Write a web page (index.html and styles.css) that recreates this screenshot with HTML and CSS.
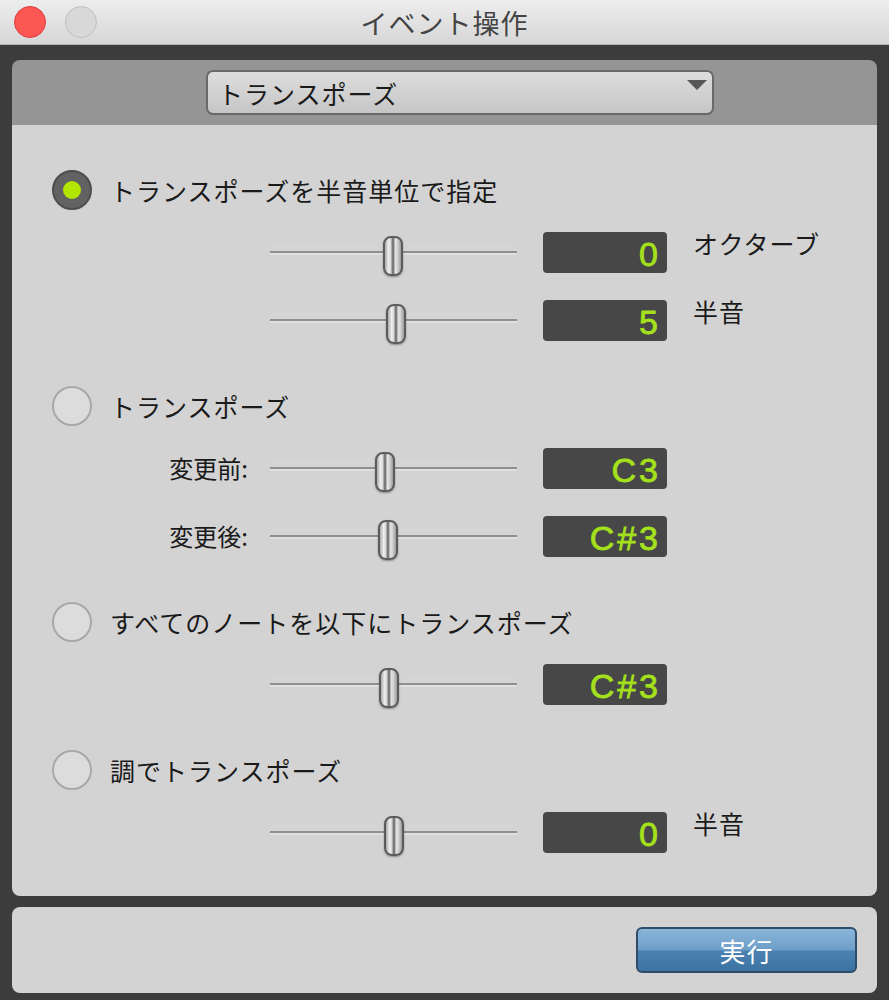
FILE: index.html
```html
<!DOCTYPE html>
<html>
  <head>
    <title>イベント操作</title>
    <link rel="stylesheet" href="styles.css">
  </head>
  <body>

    <header class="titlebar">
      <div class="lights">
        <span class="light close"></span>
        <span class="light idle"></span>
      </div>
      <h1>イベント操作</h1>
    </header>

    <main class="frame">
      <section class="panel">
        <div class="panel-head">
          <div class="select">
            <span>トランスポーズ</span>
            <span class="arrow"></span>
          </div>
        </div>

        <div class="panel-body">

          <div class="group">
            <label class="radio-row">
              <span class="radio on"></span>
              トランスポーズを半音単位で指定
            </label>
            <div class="slider-row">
              <span class="row-label"></span>
              <div class="track"><span class="thumb" style="left: 113px"></span></div>
              <output class="value">0</output>
              <span class="unit">オクターブ</span>
            </div>
            <div class="slider-row">
              <span class="row-label"></span>
              <div class="track"><span class="thumb" style="left: 116px"></span></div>
              <output class="value">5</output>
              <span class="unit">半音</span>
            </div>
          </div>

          <div class="group">
            <label class="radio-row">
              <span class="radio"></span>
              トランスポーズ
            </label>
            <div class="slider-row">
              <span class="row-label">変更前:</span>
              <div class="track"><span class="thumb" style="left: 105px"></span></div>
              <output class="value">C3</output>
              <span class="unit"></span>
            </div>
            <div class="slider-row">
              <span class="row-label">変更後:</span>
              <div class="track"><span class="thumb" style="left: 108px"></span></div>
              <output class="value">C#3</output>
              <span class="unit"></span>
            </div>
          </div>

          <div class="group">
            <label class="radio-row">
              <span class="radio"></span>
              すべてのノートを以下にトランスポーズ
            </label>
            <div class="slider-row">
              <span class="row-label"></span>
              <div class="track"><span class="thumb" style="left: 109px"></span></div>
              <output class="value">C#3</output>
              <span class="unit"></span>
            </div>
          </div>

          <div class="group">
            <label class="radio-row">
              <span class="radio"></span>
              調でトランスポーズ
            </label>
            <div class="slider-row">
              <span class="row-label"></span>
              <div class="track"><span class="thumb" style="left: 114px"></span></div>
              <output class="value">0</output>
              <span class="unit">半音</span>
            </div>
          </div>

        </div>
      </section>

      <section class="footer">
        <button class="run">実行</button>
      </section>
    </main>

  </body>
</html>
```

FILE: styles.css
```css
*,
*:before,
*:after {
  box-sizing: border-box;
}

html,
body {
  margin: 0;
  padding: 0;
  background: #3c3c3c;
  font-family: "Noto Sans CJK JP", "Noto Sans", sans-serif;
  color: #1a1a1a;
}

/* window title */
.titlebar {
  display: grid;
  grid-template-columns: 1fr auto 1fr;
  align-items: center;
  height: 45px;
  background: linear-gradient(#ededed, #d7d7d7);
  border-bottom: 1px solid #b3b3b3;
}

.lights {
  display: flex;
  gap: 19px;
  padding-left: 14px;
}

.light {
  width: 32px;
  height: 32px;
  border-radius: 50%;
}

.light.close {
  background: #fc5753;
  border: 1px solid #df3d3a;
}

.light.idle {
  background: #d8d8d8;
  border: 1px solid #c0c0c0;
}

h1 {
  margin: 0;
  font-size: 27px;
  font-weight: normal;
  color: #444444;
  letter-spacing: 1px;
}

/* dark frame */
.frame {
  display: flex;
  flex-direction: column;
  gap: 11px;
  padding: 15px 12px 7px;
}

.panel {
  display: flex;
  flex-direction: column;
  height: 836px;
  border-radius: 8px;
  overflow: hidden;
}

.panel-head {
  height: 65px;
  padding: 10px 0 0 194px;
  background: #959595;
}

.select {
  display: flex;
  width: 508px;
  height: 45px;
  padding: 0 5px 0 10px;
  align-items: center;
  border: 2px solid #696969;
  border-radius: 7px;
  background: linear-gradient(#dddddd, #c6c6c6);
  font-size: 25px;
  letter-spacing: 1px;
}

.arrow {
  align-self: flex-start;
  margin: 8px 0 0 auto;
  border-left: 10px solid transparent;
  border-right: 10px solid transparent;
  border-top: 10px solid #575757;
}

.panel-body {
  flex: 1;
  display: flex;
  flex-direction: column;
  gap: 43px;
  padding-top: 43px;
  background: #d3d3d3;
}

.group {
  display: flex;
  flex-direction: column;
  gap: 27px;
}

/* radio buttons */
.radio-row {
  display: flex;
  align-items: center;
  gap: 18px;
  height: 44px;
  margin-bottom: -7px;
  padding-left: 40px;
  font-size: 25px;
  letter-spacing: 1px;
}

.radio {
  display: flex;
  align-items: center;
  justify-content: center;
  width: 40px;
  height: 40px;
  border-radius: 50%;
  border: 2px solid #a8a8a8;
  background: #dcdcdc;
}

.radio.on {
  border-color: #4e4e4e;
  background: #626262;
}

.radio.on:after {
  content: "";
  width: 18px;
  height: 18px;
  border-radius: 50%;
  background: #b2e500;
}

/* slider rows */
.slider-row {
  display: grid;
  grid-template-columns: 232px 247px 124px auto;
  column-gap: 26px;
  height: 41px;
}

.row-label {
  align-self: center;
  justify-self: end;
  margin: -3px -4px 0 0;
  font-size: 24px;
}

.track {
  position: relative;
}

.track:before {
  content: "";
  position: absolute;
  left: 0;
  right: 0;
  top: 19px;
  height: 2px;
  background: #8f8f8f;
  box-shadow: 0 2px 0 #e0e0e0, 0 -4px 6px #dcdcdc;
}

.thumb {
  position: absolute;
  top: 4px;
  width: 20px;
  height: 40px;
  border: 2px solid #5b5b5b;
  border-radius: 8px;
  background: linear-gradient(to right, #a9a9a9, #ededed 22%, #d4d4d4 38%, #7a7a7a 44%, #7a7a7a 56%, #e6e6e6 62%, #cfcfcf 80%, #9a9a9a);
  box-shadow: 0 1px 2px rgba(0, 0, 0, 0.35);
}

.value {
  display: block;
  height: 41px;
  padding: 4px 6px 0 0;
  border-radius: 4px;
  background: #474747;
  color: #a4e11c;
  font-family: "Liberation Sans", Arial, sans-serif;
  font-size: 34px;
  line-height: 37px;
  letter-spacing: 3px;
  text-align: right;
  -webkit-text-stroke: 0.8px #a4e11c;
}

.unit {
  margin-top: -3px;
  font-size: 25px;
  line-height: 28px;
  letter-spacing: 1px;
}

/* bottom bar */
.footer {
  display: flex;
  align-items: center;
  justify-content: flex-end;
  height: 86px;
  padding-right: 20px;
  border-radius: 8px;
  background: #d3d3d3;
}

.run {
  width: 221px;
  height: 46px;
  border: 2px solid #2f4d6a;
  border-radius: 6px;
  background: linear-gradient(#8bb5d9, #6c9ec8 50%, #4b82b1 52%, #3c73a2);
  color: #ffffff;
  font-family: "Noto Sans CJK JP", sans-serif;
  font-size: 26px;
  letter-spacing: 1px;
}
```
